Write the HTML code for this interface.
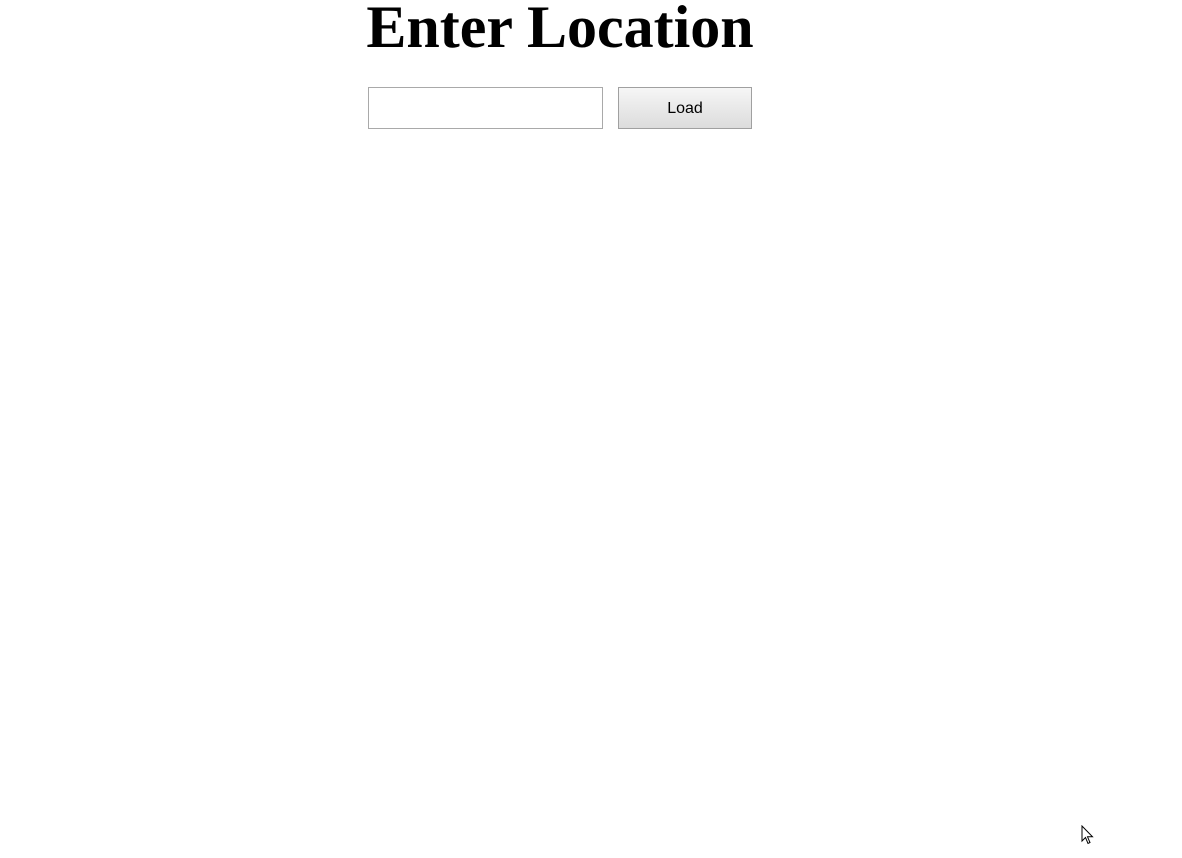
<!DOCTYPE html>
<html><head><style>
body{margin:0;width:1182px;height:858px;background:#fff;position:relative;overflow:hidden}
h1{position:absolute;left:0;width:1120px;text-align:center;top:-9px;margin:0;font:bold 60px/1.2 "Liberation Serif",serif;color:#000;white-space:nowrap}
.inp{position:absolute;left:368px;top:87px;width:233px;height:40px;border:1px solid #a9a9a9;background:#fff}
.btn{position:absolute;left:618px;top:87px;width:132px;height:40px;border:1px solid #a0a0a0;background:linear-gradient(#f6f6f6,#dcdcdc);font:16px "Liberation Sans",sans-serif;text-align:center;line-height:42px;color:#000}
</style></head><body>
<h1>Enter Location</h1>
<div class="inp"></div>
<div class="btn">Load</div>
<svg style="position:absolute;left:1081px;top:825px" width="14" height="20" viewBox="0 0 14 20"><path d="M1 1 L1 16 L4.5 12.5 L7 18.5 L9 17.5 L6.5 11.8 L11.5 11.8 Z" fill="#fff" stroke="#000" stroke-width="1"/></svg>
</body></html>
